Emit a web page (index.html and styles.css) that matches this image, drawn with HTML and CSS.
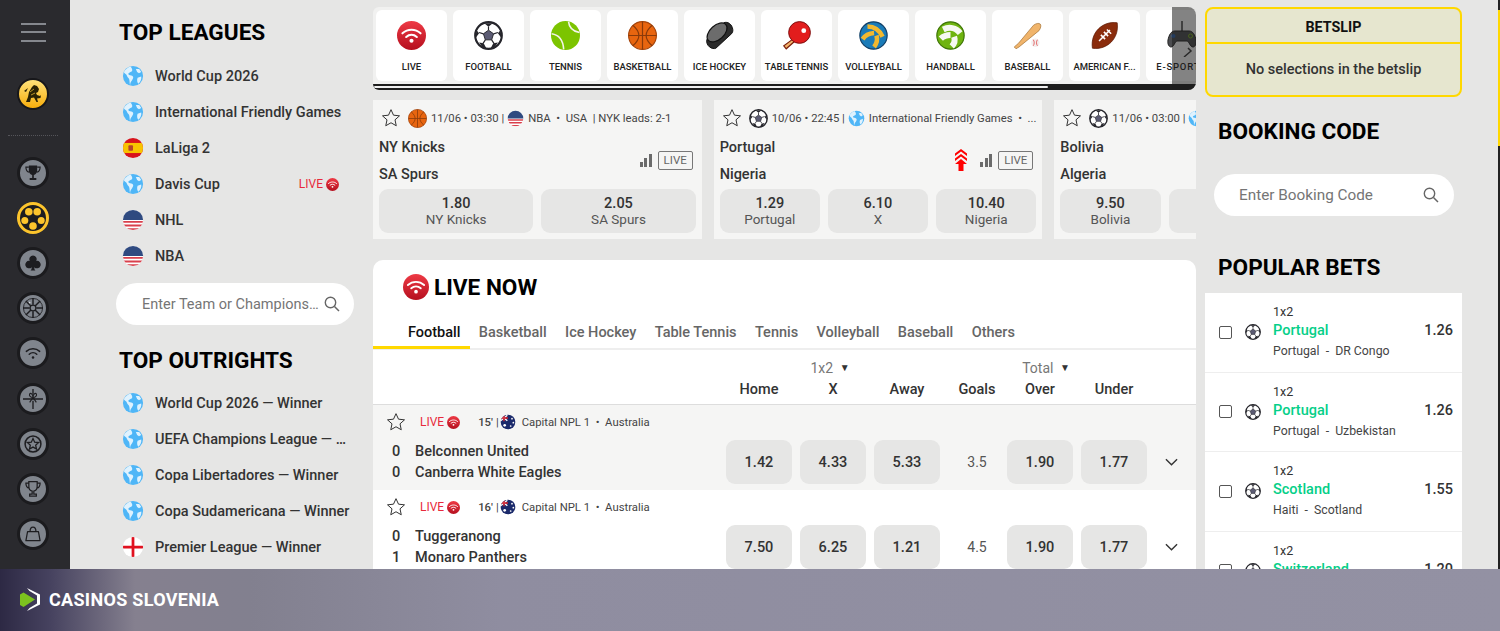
FILE: index.html
```html
<!DOCTYPE html>
<html lang="en">
<head>
    <meta charset="UTF-8">
    <meta name="viewport" content="width=device-width, initial-scale=1.0">
    <title>Live Betting</title>
    <link rel="stylesheet" href="styles.css">
</head>
<body>
    <!-- icon sprite -->
    <svg class="sprite" aria-hidden="true">
        <defs>
            <linearGradient id="redGrad" x1="0" y1="0" x2="0" y2="1"><stop offset="0" stop-color="#ee3a45"/><stop offset="1" stop-color="#b50f1e"/></linearGradient>
            <clipPath id="disc"><circle cx="12" cy="12" r="11"/></clipPath>
        </defs>
        <symbol id="i-live" viewBox="0 0 24 24">
            <circle cx="12" cy="12" r="12" fill="url(#redGrad)"/>
            <g fill="none" stroke="#fff" stroke-width="1.7" stroke-linecap="round">
                <path d="M4.500 10.200C8.800 6.300 15.200 6.300 19.500 10.200"/>
                <path d="M7.600 13.200c2.600-2.300 6.200-2.300 8.800 0"/>
            </g>
            <circle cx="12" cy="16.300" r="1.700" fill="#fff"/>
        </symbol>
        <symbol id="i-ball" viewBox="0 0 24 24">
            <circle cx="12" cy="12" r="11" fill="#fff" stroke="#25252b" stroke-width="1.800"/>
            <path d="M12 7.600l4.200 3-1.600 5H9.400l-1.600-5z" fill="#5b5b73" stroke="#25252b" stroke-width=".8"/>
            <path d="M12 7.600V4.500M16.200 10.600l3.600-1.100M14.600 15.600l1.900 2.900M9.400 15.600l-1.900 2.900M7.800 10.600L4.200 9.500" stroke="#25252b" stroke-width="1"/>
            <path d="M8.500 1.800h7L12 4.800zM22 7.500l.7 6.500-2.900-3.800zM2 7.500l2.200 2.700-2.900 3.800zM16 18.500l3.800-.7-2.800 4-3.300 1zM8 18.500l2.300 4.300-3.300-1-2.800-4z" fill="#25252b"/>
        </symbol>
        <symbol id="i-tennis" viewBox="0 0 24 24">
            <circle cx="12" cy="12" r="12" fill="#7cc400"/>
            <path d="M14.500.5c.4 4.500 3.500 8 9 9M.5 10.500c5.500.8 9.500 5 10 13" fill="none" stroke="#f4f4ea" stroke-width="1.300"/>
        </symbol>
        <symbol id="i-basket" viewBox="0 0 24 24">
            <circle cx="12" cy="12" r="11.500" fill="#e8650f" stroke="#a5450c"/>
            <g fill="none" stroke="#8a3a0a" stroke-width="1">
                <path d="M12 .5v23M.5 12h23"/>
                <path d="M4 3.500c3.500 3 5 6 5 8.500s-1.500 5.500-5 8.500M20 3.500c-3.500 3-5 6-5 8.500s1.500 5.500 5 8.500"/>
            </g>
        </symbol>
        <symbol id="i-puck" viewBox="0 0 24 24">
            <path d="M1.500 15.500L15.500 1.500c3.500-1.500 7 1.500 7.500 5.500.2 1.500-.3 2.700-1 3.500L9 22.500c-3 1.500-8.500-2-7.500-7z" fill="#2b2b2b" stroke="#111" stroke-width=".8"/>
            <ellipse cx="10" cy="9.500" rx="9.800" ry="5.800" transform="rotate(-42 10 9.500)" fill="#6c6c6c" stroke="#111" stroke-width="1"/>
        </symbol>
        <symbol id="i-paddle" viewBox="0 0 24 24">
            <path d="M9 15L1.500 20.500l2 2.500 6.800-6" fill="#f2b36b" stroke="#7a1d0a" stroke-width="1"/>
            <circle cx="14.500" cy="9.500" r="9" fill="#e21d1d" stroke="#7a1010" stroke-width=".8"/>
            <circle cx="18" cy="8" r="2" fill="#fff"/>
        </symbol>
        <symbol id="i-volley" viewBox="0 0 24 24">
            <circle cx="12" cy="12" r="11.300" fill="#1a7bb8" stroke="#123f66"/>
            <g fill="none" stroke="#f2b82e" stroke-width="3.800">
                <path d="M7 4.500c5.500 0 10 3 12.500 8.500"/>
                <path d="M12.500 10c-4 .3-7.500 2-9.500 5"/>
                <path d="M14.500 12c1 3.500.3 6.500-2 9.500"/>
            </g>
        </symbol>
        <symbol id="i-hand" viewBox="0 0 24 24">
            <circle cx="12" cy="12" r="11.300" fill="#6fb410" stroke="#3e7507"/>
            <g fill="none" stroke="#f6f8f2" stroke-width="5">
                <path d="M6 7c5-2.500 10.500-1.500 14 3"/>
                <path d="M12 11.500c-3 0-6 1-8 3"/>
                <path d="M15 13c1 3 .5 5.500-2 8"/>
            </g>
        </symbol>
        <symbol id="i-bat" viewBox="0 0 24 24">
            <path d="M1 21.500l1.500 1.500 2.500-1.500L21.500 8c1.500-2 2-4.500 1-5.500s-3.500-.5-5.500 1L4.500 18.500z" fill="#f0b46b" stroke="#a8763a" stroke-width=".6"/>
            <circle cx="18.500" cy="18" r="3.500" fill="#f3efef"/>
            <path d="M16.800 15.500c1 1.500 1 3.500 0 5M20.200 15.500c-1 1.500-1 3.500 0 5" fill="none" stroke="#d33" stroke-width=".6"/>
        </symbol>
        <symbol id="i-amfoot" viewBox="0 0 24 24">
            <path d="M22.500 1.500c1 7-1.500 12.500-5 16s-9 6-15.500 5C1 15.500 3.500 10 7 6.500s9-6 15.500-5z" fill="#8a2c0c" stroke="#5c1b06" stroke-width=".6"/>
            <path d="M7.500 16.500l9-9M9 11.500l3.500 3.500M11.500 9l3.500 3.500M14 7l3.500 3.500" stroke="#fff" stroke-width="1.300" fill="none"/>
        </symbol>
        <symbol id="i-pad" viewBox="0 0 30 36">
            <path d="M15 0v12M21 27l3 3-7 6" fill="none" stroke="#3a3a3a" stroke-width="1.500"/>
            <path d="M8 10h14c4 0 6 4 7 9 .7 4-1 7-3 7-3 0-4-6-6-6H10c-2 0-3 6-6 6-2 0-3.700-3-3-7 1-5 3-9 7-9z" fill="#4b4c4f" stroke="#202020"/>
            <circle cx="6.500" cy="15" r="2" fill="#2a5fa8"/><circle cx="23.500" cy="15" r="2" fill="none" stroke="#7cb518"/>
        </symbol>
        <symbol id="i-star" viewBox="0 0 24 24">
            <path d="M12 2l3 6.600 7.200.8-5.400 4.800 1.500 7.100L12 17.700l-6.300 3.600 1.500-7.100L1.800 9.400 9 8.600z" fill="none" stroke="#333" stroke-width="1.200" stroke-linejoin="round"/>
        </symbol>
        <symbol id="i-search" viewBox="0 0 16 16">
            <circle cx="6.500" cy="6.500" r="5.200" fill="none" stroke="#666" stroke-width="1.400"/>
            <path d="M10.500 10.500l4.500 4.500" stroke="#666" stroke-width="1.500"/>
        </symbol>
        <symbol id="i-globe" viewBox="0 0 24 24">
            <circle cx="12" cy="12" r="11" fill="#4fb6f7"/>
            <path d="M9 1.500C6 3 3 5 2 8c1 2 3 2 3.500 4s2 2 2.500 4 0 4 1 6c-.5-2 1-4 2-5.500s2-3 .5-4.500-4-.5-4.500-2S9 8 10.500 7 11 3 9 1.500zM15 4c1 1 3 0 4 .5l2 3-2.500 1.500-2-1.500zM17 14l4-1.500c.5 3-1 6-3 8-1.500-1-2-4-1-6.500z" fill="#dff2fe"/>
        </symbol>
        <symbol id="i-us" viewBox="0 0 24 24">
            <g clip-path="url(#disc)">
                <rect width="24" height="24" fill="#fff"/>
                <path d="M0 13h24v2H0zM0 17h24v2H0zM0 21h24v2H0z" fill="#d9404c"/>
                <rect width="24" height="12" fill="#2f4a80"/>
            </g>
        </symbol>
        <symbol id="i-es" viewBox="0 0 24 24">
            <g clip-path="url(#disc)">
                <rect width="24" height="24" fill="#d8131c"/>
                <rect y="6.500" width="24" height="11" fill="#f8c300"/>
                <rect x="7" y="9" width="5" height="6" rx="1" fill="#b5442a"/>
            </g>
        </symbol>
        <symbol id="i-en" viewBox="0 0 24 24">
            <g clip-path="url(#disc)">
                <rect width="24" height="24" fill="#fff"/>
                <path d="M10.500 0h3v24h-3zM0 10.500h24v3H0z" fill="#e0111f"/>
            </g>
        </symbol>
        <symbol id="i-au" viewBox="0 0 24 24">
            <g clip-path="url(#disc)">
                <rect width="24" height="24" fill="#1b2a6b"/>
                <path d="M1 2l10 8M11 2L1 10" stroke="#fff" stroke-width="2"/>
                <path d="M6 1v10M1 6h11" stroke="#d9232e" stroke-width="2"/>
                <circle cx="18" cy="7" r="1.300" fill="#fff"/><circle cx="20" cy="13" r="1.300" fill="#fff"/><circle cx="16" cy="18" r="1.300" fill="#fff"/><circle cx="7" cy="17" r="2" fill="#fff"/>
            </g>
        </symbol>
    </svg>

    <div class="page">
        <nav class="rail">
            <div class="burger"><span></span><span></span><span></span></div>
            <div class="avatar">
                <svg viewBox="0 0 24 24"><path d="M5 20l2-5 1-5 3-5 2-2 3 1 2 3-1 3-2 1 1 2 3 1 1-1-.5 3-3.500.5 1 3.500h-1.500l-2.500-4.500-3 .5-1 4zM3 9l4-3-2 4z" fill="#2a2204"/><path d="M9 10l4-3M10 13l4-2" stroke="#f7c63a" stroke-width=".7"/></svg>
            </div>
            <div class="rail-line"></div>
            <div class="rail-icons">
                <a class="rail-btn"><svg viewBox="0 0 24 24"><path d="M7 3h10v6c0 3-2 5-4 5.500V18h3v2.500H8V18h3v-3.500C9 14 7 12 7 9z" fill="#1d1d20"/><path d="M7 5H3.500c0 3.500 1.500 5.500 4 6M17 5h3.500c0 3.500-1.500 5.500-4 6" fill="none" stroke="#1d1d20" stroke-width="1.400"/></svg></a>
                <a class="rail-btn rail-on"><svg viewBox="0 0 24 24"><circle cx="12" cy="12" r="12" fill="#1d1d20"/><circle cx="7.800" cy="5.800" r="3.800" fill="#fcc42c"/><circle cx="16.200" cy="5.800" r="3.800" fill="#fcc42c"/><circle cx="3.800" cy="14.500" r="3.500" fill="#fcc42c"/><circle cx="20.200" cy="14.500" r="3.500" fill="#fcc42c"/><circle cx="12" cy="20" r="3.800" fill="#fcc42c"/></svg></a>
                <a class="rail-btn"><svg viewBox="0 0 24 24"><path d="M12 3a4.500 4.500 0 0 1 4 6.500 4.500 4.500 0 1 1-2.500 7.500c0 2 .5 3 1.500 4H9c1-1 1.500-2 1.500-4A4.500 4.500 0 1 1 8 9.500 4.500 4.500 0 0 1 12 3z" fill="#1d1d20"/></svg></a>
                <a class="rail-btn"><svg viewBox="0 0 24 24"><circle cx="12" cy="12" r="11.500" fill="none" stroke="#1d1d20" stroke-width="1"/><circle cx="12" cy="12" r="3.500" fill="none" stroke="#1d1d20" stroke-width="1.500"/><path d="M12 0v8M12 16v8M0 12h8M16 12h8M3.500 3.500l6 6M14.500 14.500l6 6M20.500 3.500l-6 6M9.500 14.500l-6 6" stroke="#1d1d20" stroke-width="1.800"/><circle cx="8" cy="5.500" r="1" fill="#d6d8dc"/></svg></a>
                <a class="rail-btn"><svg viewBox="0 0 24 24"><g fill="none" stroke="#1d1d20" stroke-width="1.800" stroke-linecap="round"><path d="M4 10c4.500-4 11.500-4 16 0"/><path d="M7.500 13.500c2.600-2.300 6.400-2.300 9 0"/></g><circle cx="12" cy="17.500" r="1.500" fill="#1d1d20"/></svg></a>
                <a class="rail-btn"><svg viewBox="0 0 24 24"><path d="M0 12h24M12 0v7M12 14v10" stroke="#1d1d20" stroke-width="1.600"/><path d="M12 10C9 10 7 8 8 6s4 0 4 4c0-4 3-6 4-4s-1 4-4 4zM12 10l-4 6M12 10l4 6" fill="none" stroke="#1d1d20" stroke-width="1.300"/></svg></a>
                <a class="rail-btn"><svg viewBox="0 0 24 24"><circle cx="12" cy="12" r="9.500" fill="none" stroke="#1d1d20" stroke-width="1.800"/><path d="M12 5.500l2 4.300 4.700.5-3.500 3.200 1 4.600-4.200-2.400-4.200 2.400 1-4.600-3.500-3.200 4.700-.5z" fill="none" stroke="#1d1d20" stroke-width="1.500"/></svg></a>
                <a class="rail-btn"><svg viewBox="0 0 24 24"><path d="M7 3h10v6c0 3-2 5-4 5.500V18h3v2.500H8V18h3v-3.500C9 14 7 12 7 9zM7 5H3.500c0 3.500 1.500 5.500 4 6M17 5h3.500c0 3.500-1.500 5.500-4 6" fill="none" stroke="#1d1d20" stroke-width="1.500"/></svg></a>
                <a class="rail-btn"><svg viewBox="0 0 24 24"><path d="M5.500 9h13l2 11h-17z" fill="none" stroke="#1d1d20" stroke-width="1.500" stroke-linejoin="round"/><path d="M8.500 9c0-7 7-7 7 0" fill="none" stroke="#1d1d20" stroke-width="1.500"/></svg></a>
            </div>
        </nav>

        <aside class="leagues">
            <h2 class="title">Top Leagues</h2>
            <ul class="link-list">
                <li><svg class="flag"><use href="#i-globe"/></svg><span>World Cup 2026</span></li>
                <li><svg class="flag"><use href="#i-globe"/></svg><span>International Friendly Games</span></li>
                <li><svg class="flag"><use href="#i-es"/></svg><span>LaLiga 2</span></li>
                <li><svg class="flag"><use href="#i-globe"/></svg><span>Davis Cup</span><em class="live-tag">LIVE <svg><use href="#i-live"/></svg></em></li>
                <li><svg class="flag"><use href="#i-us"/></svg><span>NHL</span></li>
                <li><svg class="flag"><use href="#i-us"/></svg><span>NBA</span></li>
            </ul>
            <div class="search search-left"><span>Enter Team or Champions…</span><svg><use href="#i-search"/></svg></div>
            <h2 class="title title-next">Top Outrights</h2>
            <ul class="link-list">
                <li><svg class="flag"><use href="#i-globe"/></svg><span>World Cup 2026 — Winner</span></li>
                <li><svg class="flag"><use href="#i-globe"/></svg><span>UEFA Champions League — …</span></li>
                <li><svg class="flag"><use href="#i-globe"/></svg><span>Copa Libertadores — Winner</span></li>
                <li><svg class="flag"><use href="#i-globe"/></svg><span>Copa Sudamericana — Winner</span></li>
                <li><svg class="flag"><use href="#i-en"/></svg><span>Premier League — Winner</span></li>
            </ul>
        </aside>

        <main class="main">
            <div class="sports">
                <div class="sports-row">
                    <a class="sport"><svg><use href="#i-live"/></svg><span>Live</span></a>
                    <a class="sport"><svg><use href="#i-ball"/></svg><span>Football</span></a>
                    <a class="sport"><svg><use href="#i-tennis"/></svg><span>Tennis</span></a>
                    <a class="sport"><svg><use href="#i-basket"/></svg><span>Basketball</span></a>
                    <a class="sport"><svg><use href="#i-puck"/></svg><span>Ice Hockey</span></a>
                    <a class="sport"><svg><use href="#i-paddle"/></svg><span>Table Tennis</span></a>
                    <a class="sport"><svg><use href="#i-volley"/></svg><span>Volleyball</span></a>
                    <a class="sport"><svg><use href="#i-hand"/></svg><span>Handball</span></a>
                    <a class="sport"><svg><use href="#i-bat"/></svg><span>Baseball</span></a>
                    <a class="sport"><svg><use href="#i-amfoot"/></svg><span>American F...</span></a>
                    <a class="sport sport-pad"><svg><use href="#i-pad"/></svg><span>E-Sports</span></a>
                </div>
                <div class="sports-track"><div class="sports-thumb"></div></div>
                <div class="sports-shade"></div>
            </div>

            <div class="cards">
                <div class="card">
                    <div class="card-meta">
                        <svg class="star"><use href="#i-star"/></svg>
                        <svg class="sport-mini"><use href="#i-basket"/></svg>
                        <span>11/06 • 03:30 |</span>
                        <svg class="flag-mini"><use href="#i-us"/></svg>
                        <span class="meta-name">NBA &nbsp;•&nbsp; USA &nbsp;| NYK leads: 2-1</span>
                    </div>
                    <div class="card-mid">
                        <div class="card-teams"><div>NY Knicks</div><div>SA Spurs</div></div>
                        <div class="signal"><i></i><i></i><i></i></div>
                        <div class="live-box">LIVE</div>
                    </div>
                    <div class="card-odds">
                        <a class="odd"><b>1.80</b><span>NY Knicks</span></a>
                        <a class="odd"><b>2.05</b><span>SA Spurs</span></a>
                    </div>
                </div>
                <div class="card">
                    <div class="card-meta">
                        <svg class="star"><use href="#i-star"/></svg>
                        <svg class="sport-mini"><use href="#i-ball"/></svg>
                        <span>10/06 • 22:45 |</span>
                        <svg class="flag-mini"><use href="#i-globe"/></svg>
                        <span class="meta-name">International Friendly Games &nbsp;• &nbsp;...</span>
                    </div>
                    <div class="card-mid">
                        <div class="card-teams"><div>Portugal</div><div>Nigeria</div></div>
                        <svg class="boost" viewBox="0 0 14 22"><path d="M7 0l6 4.500v2.500L7 2.500 1 7V4.500zM7 5l6 4.500V12L7 7.500 1 12V9.500zM7 10l6 5H9.500v7h-5v-7H1z" fill="#f00"/></svg>
                        <div class="signal"><i></i><i></i><i></i></div>
                        <div class="live-box">LIVE</div>
                    </div>
                    <div class="card-odds">
                        <a class="odd"><b>1.29</b><span>Portugal</span></a>
                        <a class="odd"><b>6.10</b><span>X</span></a>
                        <a class="odd"><b>10.40</b><span>Nigeria</span></a>
                    </div>
                </div>
                <div class="card">
                    <div class="card-meta">
                        <svg class="star"><use href="#i-star"/></svg>
                        <svg class="sport-mini"><use href="#i-ball"/></svg>
                        <span>11/06 • 03:00 |</span>
                        <svg class="flag-mini"><use href="#i-globe"/></svg>
                    </div>
                    <div class="card-mid">
                        <div class="card-teams"><div>Bolivia</div><div>Algeria</div></div>
                    </div>
                    <div class="card-odds">
                        <a class="odd"><b>9.50</b><span>Bolivia</span></a>
                        <a class="odd"></a>
                        <a class="odd"></a>
                    </div>
                </div>
            </div>

            <section class="live">
                <div class="live-title"><svg><use href="#i-live"/></svg><h2 class="title">Live Now</h2></div>
                <div class="tabs">
                    <a class="tab tab-on">Football</a>
                    <a class="tab">Basketball</a>
                    <a class="tab">Ice Hockey</a>
                    <a class="tab">Table Tennis</a>
                    <a class="tab">Tennis</a>
                    <a class="tab">Volleyball</a>
                    <a class="tab">Baseball</a>
                    <a class="tab">Others</a>
                </div>
                <div class="grid grid-head">
                    <span class="pick pick-x">1x2 <i>▼</i></span>
                    <span class="pick pick-total">Total <i>▼</i></span>
                    <b class="col-home">Home</b>
                    <b class="col-x">X</b>
                    <b class="col-away">Away</b>
                    <b class="col-goals">Goals</b>
                    <b class="col-over">Over</b>
                    <b class="col-under">Under</b>
                </div>

                <div class="grid row row-alt">
                    <div class="row-info">
                        <div class="row-meta">
                            <svg class="star"><use href="#i-star"/></svg>
                            <em class="live-tag">LIVE <svg><use href="#i-live"/></svg></em>
                            <b>15'</b><span class="bar">|</span>
                            <svg class="flag-mini"><use href="#i-au"/></svg>
                            <span>Capital NPL 1 &nbsp;•&nbsp; Australia</span>
                        </div>
                        <div class="row-team"><b>0</b><span>Belconnen United</span></div>
                        <div class="row-team"><b>0</b><span>Canberra White Eagles</span></div>
                    </div>
                    <a class="price">1.42</a><a class="price">4.33</a><a class="price">5.33</a>
                    <span class="goals">3.5</span>
                    <a class="price">1.90</a><a class="price">1.77</a>
                    <svg class="chev" viewBox="0 0 14 8"><path d="M1 1l6 6 6-6" fill="none" stroke="#333" stroke-width="1.500"/></svg>
                </div>

                <div class="grid row">
                    <div class="row-info">
                        <div class="row-meta">
                            <svg class="star"><use href="#i-star"/></svg>
                            <em class="live-tag">LIVE <svg><use href="#i-live"/></svg></em>
                            <b>16'</b><span class="bar">|</span>
                            <svg class="flag-mini"><use href="#i-au"/></svg>
                            <span>Capital NPL 1 &nbsp;•&nbsp; Australia</span>
                        </div>
                        <div class="row-team"><b>0</b><span>Tuggeranong</span></div>
                        <div class="row-team"><b>1</b><span>Monaro Panthers</span></div>
                    </div>
                    <a class="price">7.50</a><a class="price">6.25</a><a class="price">1.21</a>
                    <span class="goals">4.5</span>
                    <a class="price">1.90</a><a class="price">1.77</a>
                    <svg class="chev" viewBox="0 0 14 8"><path d="M1 1l6 6 6-6" fill="none" stroke="#333" stroke-width="1.500"/></svg>
                </div>
            </section>
        </main>

        <aside class="side">
            <div class="betslip">
                <div class="betslip-head">BETSLIP</div>
                <div class="betslip-body">No selections in the betslip</div>
            </div>
            <h2 class="title side-title">Booking Code</h2>
            <div class="search search-right"><span>Enter Booking Code</span><svg><use href="#i-search"/></svg></div>
            <h2 class="title side-title2">Popular Bets</h2>
            <div class="bets">
                <div class="bet">
                    <i class="check"></i><svg class="bet-ball"><use href="#i-ball"/></svg>
                    <div class="bet-text"><div class="bet-type">1x2</div><div class="bet-name">Portugal</div><div class="bet-match">Portugal &nbsp;-&nbsp; DR Congo</div></div>
                    <b class="bet-odd">1.26</b>
                </div>
                <div class="bet">
                    <i class="check"></i><svg class="bet-ball"><use href="#i-ball"/></svg>
                    <div class="bet-text"><div class="bet-type">1x2</div><div class="bet-name">Portugal</div><div class="bet-match">Portugal &nbsp;-&nbsp; Uzbekistan</div></div>
                    <b class="bet-odd">1.26</b>
                </div>
                <div class="bet">
                    <i class="check"></i><svg class="bet-ball"><use href="#i-ball"/></svg>
                    <div class="bet-text"><div class="bet-type">1x2</div><div class="bet-name">Scotland</div><div class="bet-match">Haiti &nbsp;-&nbsp; Scotland</div></div>
                    <b class="bet-odd">1.55</b>
                </div>
                <div class="bet">
                    <i class="check"></i><svg class="bet-ball"><use href="#i-ball"/></svg>
                    <div class="bet-text"><div class="bet-type">1x2</div><div class="bet-name">Switzerland</div></div>
                    <b class="bet-odd">1.20</b>
                </div>
            </div>
        </aside>
    </div>

    <div class="scroll-edge"></div>

    <footer class="promo">
        <svg class="promo-logo" viewBox="0 0 20 23">
            <path d="M0 6.500L3.500 4.500 15 11.500 3.500 19 0 17z" fill="#7cc21e"/>
            <path d="M7 0l13 6.500v10L7 23l2.500-3L17 15.500v-8L9.500 3z" fill="#fff"/>
        </svg>
        <span>Casinos Slovenia</span>
    </footer>
</body>
</html>
```
FILE: styles.css
```css
* {
    box-sizing: border-box;
}
html, body {
    margin: 0;
    height: 100%;
    overflow: hidden;
}
body {
    font-family: Roboto, "Liberation Sans", sans-serif;
    background: #e6e6e5;
    color: #333;
}
ul {
    list-style: none;
    margin: 0;
    padding: 0;
}
em {
    font-style: normal;
}
.sprite {
    position: absolute;
    width: 0;
    height: 0;
}
.page {
    display: flex;
    height: 631px;
    overflow: hidden;
}
.title {
    margin: 0;
    font-size: 22.600px;
    line-height: 28px;
    font-weight: 700;
    color: #000;
    text-transform: uppercase;
}

/* left rail */
.rail {
    flex: none;
    width: 70px;
    padding-right: 4px;
    background: #2a2a2e;
    display: flex;
    flex-direction: column;
    align-items: center;
}
.burger {
    margin-top: 23px;
    display: flex;
    flex-direction: column;
    gap: 6.300px;
    width: 25px;
}
.burger span {
    height: 2px;
    background: #85888e;
}
.avatar {
    margin-top: 36px;
    width: 32px;
    height: 32px;
    border-radius: 50%;
    border: 2px solid #17171a;
    background: linear-gradient(#ffe27a, #f7ad0c);
    padding: 2px;
}
.avatar svg {
    display: block;
    width: 100%;
    height: 100%;
}
.rail-line {
    margin-top: 25px;
    width: 50px;
    border-top: 1px dotted #55555a;
}
.rail-icons {
    margin-top: 21px;
    display: flex;
    flex-direction: column;
    gap: 13.200px;
}
.rail-btn {
    width: 32px;
    height: 32px;
    border-radius: 50%;
    background: #80858d;
    border: 3px solid #1b1b1e;
    padding: 3px;
    display: block;
}
.rail-btn svg {
    display: block;
    width: 100%;
    height: 100%;
}
.rail-on {
    background: #1d1d20;
    border-color: #fcc42c;
    padding: 1px;
}

/* leagues */
.leagues {
    flex: none;
    width: 303px;
    padding: 19px 0 0 50px;
}
.leagues .title {
    margin-left: -1px;
}
.link-list {
    margin-top: 11px;
    width: 235px;
}
.title-next + .link-list {
    margin-top: 10px;
}
.link-list li {
    height: 36px;
    display: flex;
    align-items: center;
    font-size: 14.500px;
    font-weight: 500;
    white-space: nowrap;
}
.flag {
    flex: none;
    width: 22px;
    height: 22px;
    margin: 0 11px 0 2px;
}
.live-tag {
    display: inline-flex;
    align-items: center;
    gap: 3px;
    color: #e8293b;
    font-size: 12px;
    font-weight: 400;
}
.live-tag svg {
    width: 13px;
    height: 13px;
}
.link-list .live-tag {
    margin-left: auto;
    margin-right: 16px;
}
.search {
    height: 42px;
    border-radius: 21px;
    background: #fff;
    display: flex;
    align-items: center;
    justify-content: space-between;
    color: #757575;
    font-size: 15.300px;
}
.search svg {
    flex: none;
    width: 16px;
    height: 16px;
}
.search-left {
    margin: 9px 0 0 -4px;
    width: 238px;
    padding: 0 14px 0 26px;
}
.search-left span {
    font-size: 14.500px;
}
.leagues .title-next {
    margin-top: 22px;
}

/* main column */
.main {
    flex: none;
    width: 823px;
    padding-top: 7px;
}
.sports {
    position: relative;
    height: 83px;
    background: #f1f1f0;
    border-radius: 6px 8px 8px 6px;
    overflow: hidden;
}
.sports-row {
    display: flex;
    gap: 6px;
    padding: 3px 0 0 3px;
}
.sport {
    flex: none;
    width: 71px;
    height: 71px;
    background: #fff;
    border-radius: 6px;
    padding-top: 11px;
    display: flex;
    flex-direction: column;
    align-items: center;
}
.sport svg {
    flex: none;
    width: 29px;
    height: 29px;
}
.sport span {
    margin-top: 10px;
    width: 100%;
    padding: 0 2px;
    font-size: 9.500px;
    line-height: 14px;
    font-weight: 500;
    color: #222;
    text-align: center;
    text-transform: uppercase;
    white-space: nowrap;
}
.sport-pad svg {
    width: 30px;
    height: 36px;
    margin-bottom: -7px;
}
.sport-pad span {
    letter-spacing: 0.8px;
}
.sports-track {
    position: absolute;
    left: 0;
    right: 0;
    bottom: 0;
    height: 6px;
    background: #1e1e1e;
    padding: 2px 0 0 1px;
}
.sports-thumb {
    width: 674px;
    height: 2px;
    background: #f0f0f0;
    border-radius: 1px;
}
.sports-shade {
    position: absolute;
    top: 0;
    right: 0;
    bottom: 0;
    width: 24px;
    background: rgba(30, 30, 30, 0.55);
}

/* match cards */
.cards {
    margin-top: 10px;
    display: flex;
    gap: 12px;
    overflow: hidden;
}
.card {
    flex: none;
    width: 328.670px;
    height: 139px;
    background: #f5f5f4;
    padding: 8px 6px 6px;
}
.card-meta {
    height: 20px;
    display: flex;
    align-items: center;
    font-size: 11.300px;
    color: #444;
    white-space: nowrap;
}
.star {
    flex: none;
    width: 20px;
    height: 20px;
    margin-left: 2px;
}
.sport-mini {
    flex: none;
    width: 19px;
    height: 19px;
    margin: 0 4px 0 7px;
}
.flag-mini {
    flex: none;
    width: 17px;
    height: 17px;
    margin: 0 4px 0 3px;
}
.card-mid {
    margin-top: 5px;
    height: 54px;
    display: flex;
    align-items: center;
    gap: 6px;
    padding-right: 3px;
}
.card-teams {
    margin-right: auto;
    padding-top: 2px;
    font-size: 14.500px;
    line-height: 27px;
    font-weight: 500;
}
.signal {
    display: flex;
    align-items: flex-end;
    gap: 1.500px;
    height: 13px;
}
.signal i {
    width: 3px;
    background: #6b6b6b;
}
.signal i:nth-child(1) { height: 5px; }
.signal i:nth-child(2) { height: 9px; }
.signal i:nth-child(3) { height: 13px; }
.live-box {
    width: 35px;
    height: 19px;
    border: 1px solid #777;
    border-radius: 2px;
    font-size: 11.500px;
    line-height: 17px;
    text-align: center;
    color: #666;
}
.boost {
    width: 14px;
    height: 22px;
    margin-right: 6px;
}
.card-odds {
    margin-top: 2px;
    display: flex;
    gap: 8px;
}
.odd {
    flex: 1;
    height: 44px;
    border-radius: 9px;
    background: #e6e6e5;
    display: flex;
    flex-direction: column;
    align-items: center;
    justify-content: center;
}
.odd b {
    font-size: 14.500px;
    line-height: 17px;
    font-weight: 500;
}
.odd span {
    font-size: 13.500px;
    line-height: 15px;
    color: #555;
}

/* live panel */
.live {
    margin-top: 21px;
    background: #fff;
    border-radius: 10px 10px 0 0;
}
.live-title {
    height: 54px;
    padding-left: 30px;
    display: flex;
    align-items: center;
    gap: 5px;
}
.live-title svg {
    width: 26px;
    height: 26px;
}
.live-title .title {
    padding-top: 2px;
}
.tabs {
    height: 36px;
    display: flex;
    border-bottom: 2px solid #eee;
}
.tab {
    height: 35px;
    padding: 0 9.200px;
    line-height: 38px;
    font-size: 14.500px;
    font-weight: 500;
    color: #666;
}
.tab-on {
    padding-left: 35px;
    color: #111;
    border-bottom: 3px solid #ffd800;
}
.grid {
    display: grid;
    grid-template-columns: 345px 66px 66px 66px 51px 66px 66px 1fr;
    column-gap: 8px;
}
.grid-head {
    height: 55px;
    padding-top: 8px;
    grid-template-rows: 20px 20px;
    row-gap: 2px;
    border-bottom: 1px solid #ddd;
    text-align: center;
    line-height: 20px;
    white-space: nowrap;
}
.grid-head b {
    grid-row: 2;
    font-size: 14.500px;
    font-weight: 500;
}
.pick {
    grid-row: 1;
    font-size: 14px;
    color: #777;
}
.pick i {
    font-style: normal;
    font-size: 10px;
    color: #333;
    margin-left: 3px;
    vertical-align: 2px;
}
.pick-x {
    grid-column: 3;
    padding-right: 6px;
}
.pick-total {
    grid-column: 6;
    padding-left: 12px;
}
.col-home { grid-column: 2; }
.col-x { grid-column: 3; }
.col-away { grid-column: 4; }
.col-goals { grid-column: 5; padding-left: 7px; }
.col-over { grid-column: 6; }
.col-under { grid-column: 7; }
.row {
    height: 85px;
    align-items: end;
    padding-bottom: 6px;
}
.row-alt {
    background: #f5f5f4;
}
.row-info {
    align-self: start;
    padding-left: 15px;
}
.row-meta {
    height: 36px;
    padding-bottom: 2px;
    display: flex;
    align-items: center;
    font-size: 11.300px;
    color: #444;
    white-space: nowrap;
}
.row-meta .star {
    margin-left: -2px;
}
.row-meta .live-tag {
    margin: 0 18px 0 14px;
}
.row-meta b {
    font-weight: 500;
}
.bar {
    margin-left: 3px;
}
.row-meta .flag-mini {
    width: 16px;
    height: 16px;
    margin: 0 6px 0 1px;
}
.row-team {
    display: flex;
    gap: 11px;
    height: 21px;
    line-height: 21px;
    font-size: 14.500px;
    font-weight: 500;
}
.row-team b {
    width: 16px;
    text-align: center;
    font-weight: 500;
}
.price {
    height: 44px;
    border-radius: 9px;
    background: #e6e6e5;
    line-height: 46px;
    text-align: center;
    font-size: 14.500px;
    font-weight: 500;
}
.goals {
    height: 44px;
    line-height: 44px;
    padding-left: 7px;
    text-align: center;
    font-size: 14px;
    color: #555;
}
.chev {
    width: 13px;
    height: 8px;
    margin: 0 0 18px 10px;
}

/* right column */
.side {
    flex: none;
    width: 257px;
    margin-left: 9px;
    padding-top: 7px;
}
.betslip {
    height: 89.500px;
    border: 2px solid #ffd800;
    border-radius: 8px;
    background: #e6e6cf;
    font-weight: 500;
    text-align: center;
}
.betslip-head {
    height: 35px;
    line-height: 36px;
    border-bottom: 2px solid #ffd800;
    font-size: 14.300px;
    font-weight: 700;
    color: #111;
}
.betslip-body {
    line-height: 51px;
    font-size: 14.500px;
}
.side-title {
    margin: 21.500px 0 0 13px;
}
.search-right {
    margin: 28px 0 0 9px;
    width: 240px;
    padding: 0 15px 0 25px;
}
.side-title2 {
    margin: 38px 0 0 13px;
}
.bets {
    margin-top: 11px;
    background: #fff;
}
.bet {
    height: 79.500px;
    display: flex;
    align-items: center;
    padding: 0 9px 0 14px;
    border-bottom: 1px solid #eee;
}
.check {
    flex: none;
    width: 13px;
    height: 13px;
    border: 1.500px solid #555;
    border-radius: 2px;
}
.bet-ball {
    flex: none;
    width: 16px;
    height: 16px;
    margin: 0 12px 0 13px;
}
.bet-text {
    align-self: flex-start;
    padding-top: 10px;
    margin-right: auto;
    white-space: nowrap;
}
.bet-type {
    font-size: 12.500px;
    line-height: 18px;
}
.bet-name {
    font-size: 14.500px;
    line-height: 20px;
    font-weight: 500;
    color: #05cf88;
}
.bet-match {
    font-size: 12.300px;
    line-height: 21px;
    color: #444;
}
.bet-odd {
    align-self: flex-start;
    margin-top: 28px;
    font-size: 14.500px;
    line-height: 20px;
    font-weight: 500;
}

/* overlays */
.scroll-edge {
    position: fixed;
    top: 0;
    right: 0;
    width: 2px;
    height: 100%;
    background: linear-gradient(#222 10px, #ffd800 10px, #ffd800 146px, #222 146px);
}
.promo {
    position: fixed;
    left: 0;
    right: 0;
    bottom: 0;
    height: 62px;
    padding: 0 0 2px 20px;
    display: flex;
    align-items: center;
    gap: 9px;
    background: linear-gradient(90deg, #2d2944 0, #46425f 50px, #85808f 135px, #82808f 250px, #8f8da0 500px, #9391a3 100%);
    color: #fff;
    font-size: 18px;
    font-weight: 700;
    letter-spacing: 0.3px;
    text-transform: uppercase;
}
.promo-logo {
    width: 20px;
    height: 23px;
}
```
